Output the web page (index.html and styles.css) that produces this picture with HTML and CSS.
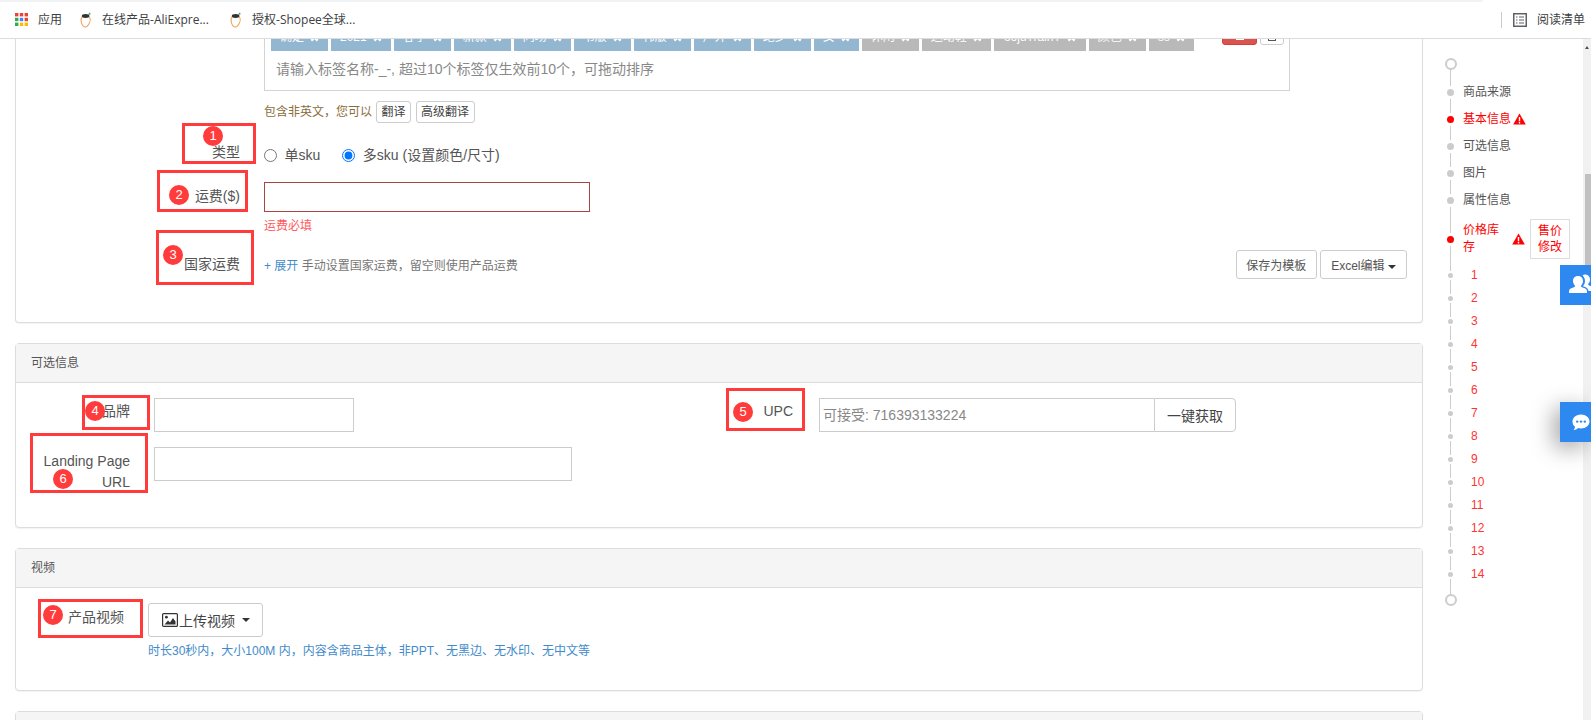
FILE: index.html
```html
<!DOCTYPE html>
<html lang="zh-CN">
<head>
<meta charset="utf-8">
<title>产品编辑</title>
<link rel="stylesheet" href="styles.css">
</head>
<body>
<div class="omni-edge"></div>
<header class="bookmarks">
  <svg class="apps" width="13" height="13" viewBox="0 0 13 13"><rect width="3.4" height="3.4" fill="#ea4335"/><rect x="4.8" width="3.4" height="3.4" fill="#ea4335"/><rect x="9.6" width="3.4" height="3.4" fill="#ea4335"/><rect y="4.8" width="3.4" height="3.4" fill="#34a853"/><rect x="4.8" y="4.8" width="3.4" height="3.4" fill="#4285f4"/><rect x="9.6" y="4.8" width="3.4" height="3.4" fill="#ea4335"/><rect y="9.6" width="3.4" height="3.4" fill="#34a853"/><rect x="4.8" y="9.6" width="3.4" height="3.4" fill="#fbbc05"/><rect x="9.6" y="9.6" width="3.4" height="3.4" fill="#fbbc05"/></svg>
  <span class="bm-text bm-apps">应用</span>
  <svg class="fruit" width="12" height="16" viewBox="0 0 12 16"><path d="M2.2 4.5 C0.3 7 1 11.5 3 13.8 C4.4 15.4 6.2 15.4 7.6 13.8 C10 11.2 11 7.2 9.2 4.5" fill="#fff" stroke="#eda55c" stroke-width="1.1"/><ellipse cx="5.6" cy="4" rx="3.8" ry="1.9" fill="#333"/><path d="M7.8 2.8 L10 0.3 L10.6 2.6 Z" fill="#4a9a58"/></svg>
  <span class="bm-text bm-first">在线产品-AliExpre...</span>
  <svg class="fruit" width="12" height="16" viewBox="0 0 12 16"><path d="M2.2 4.5 C0.3 7 1 11.5 3 13.8 C4.4 15.4 6.2 15.4 7.6 13.8 C10 11.2 11 7.2 9.2 4.5" fill="#fff" stroke="#eda55c" stroke-width="1.1"/><ellipse cx="5.6" cy="4" rx="3.8" ry="1.9" fill="#333"/><path d="M7.8 2.8 L10 0.3 L10.6 2.6 Z" fill="#4a9a58"/></svg>
  <span class="bm-text">授权-Shopee全球...</span>
  <span class="bm-divider"></span>
  <svg class="reading" width="14" height="14" viewBox="0 0 14 14"><rect x="0.75" y="0.75" width="12.5" height="12.5" fill="none" stroke="#5f6368" stroke-width="1.5"/><path d="M3 4h1.5M6 4h5M3 7h1.5M6 7h5M3 10h1.5M6 10h5" stroke="#5f6368" stroke-width="1.2"/></svg>
  <span class="bm-text">阅读清单</span>
</header>

<div class="page">
  <main class="main">
    <section class="card card-cut">
      <div class="tagbox">
        <div class="tagrow">
          <span class="tag">确定<svg class="x" viewBox="0 0 10 10"><path d="M1.5 1.5l7 7M8.5 1.5l-7 7"/></svg></span>
          <span class="tag">2021<svg class="x" viewBox="0 0 10 10"><path d="M1.5 1.5l7 7M8.5 1.5l-7 7"/></svg></span>
          <span class="tag">春季<svg class="x" viewBox="0 0 10 10"><path d="M1.5 1.5l7 7M8.5 1.5l-7 7"/></svg></span>
          <span class="tag">新款<svg class="x" viewBox="0 0 10 10"><path d="M1.5 1.5l7 7M8.5 1.5l-7 7"/></svg></span>
          <span class="tag">同场<svg class="x" viewBox="0 0 10 10"><path d="M1.5 1.5l7 7M8.5 1.5l-7 7"/></svg></span>
          <span class="tag">书版<svg class="x" viewBox="0 0 10 10"><path d="M1.5 1.5l7 7M8.5 1.5l-7 7"/></svg></span>
          <span class="tag">韩版<svg class="x" viewBox="0 0 10 10"><path d="M1.5 1.5l7 7M8.5 1.5l-7 7"/></svg></span>
          <span class="tag">户外<svg class="x" viewBox="0 0 10 10"><path d="M1.5 1.5l7 7M8.5 1.5l-7 7"/></svg></span>
          <span class="tag">跑步<svg class="x" viewBox="0 0 10 10"><path d="M1.5 1.5l7 7M8.5 1.5l-7 7"/></svg></span>
          <span class="tag">女<svg class="x" viewBox="0 0 10 10"><path d="M1.5 1.5l7 7M8.5 1.5l-7 7"/></svg></span>
          <span class="tag tag-grey">休闲<svg class="x" viewBox="0 0 10 10"><path d="M1.5 1.5l7 7M8.5 1.5l-7 7"/></svg></span>
          <span class="tag tag-grey">运动鞋<svg class="x" viewBox="0 0 10 10"><path d="M1.5 1.5l7 7M8.5 1.5l-7 7"/></svg></span>
          <span class="tag tag-grey tag-wide">oojuTrainT<svg class="x" viewBox="0 0 10 10"><path d="M1.5 1.5l7 7M8.5 1.5l-7 7"/></svg></span>
          <span class="tag tag-grey">颜色<svg class="x" viewBox="0 0 10 10"><path d="M1.5 1.5l7 7M8.5 1.5l-7 7"/></svg></span>
          <span class="tag tag-grey">ss<svg class="x" viewBox="0 0 10 10"><path d="M1.5 1.5l7 7M8.5 1.5l-7 7"/></svg></span>
          <span class="tag-actions">
            <span class="act act-red"><i></i></span>
            <span class="act act-white"><i></i></span>
          </span>
        </div>
        <p class="tag-hint">请输入标签名称-_-, 超过10个标签仅生效前10个，可拖动排序</p>
      </div>

      <div class="translate">
        <span class="translate-note">包含非英文，您可以</span>
        <button class="btn-xs">翻译</button>
        <button class="btn-xs">高级翻译</button>
      </div>

      <div class="row row-type">
        <span class="lbl lbl-wide lbl-type">类型</span>
        <div class="radios">
          <label class="radio"><input type="radio" name="sku">单sku</label>
          <label class="radio"><input type="radio" name="sku" checked>多sku (设置颜色/尺寸)</label>
        </div>
      </div>

      <div class="row row-price">
        <span class="lbl lbl-wide lbl-price">运费($)</span>
        <input class="field field-error" type="text">
      </div>
      <div class="error">运费必填</div>

      <div class="row row-country">
        <span class="lbl lbl-wide lbl-country">国家运费</span>
        <span class="note"><a class="link">+ 展开</a> 手动设置国家运费，留空则使用产品运费</span>
        <span class="country-actions">
          <button class="btn-sm">保存为模板</button>
          <button class="btn-sm btn-excel">Excel编辑<b class="caret"></b></button>
        </span>
      </div>
    </section>

    <section class="card">
      <h2 class="card-head">可选信息</h2>
      <div class="card-body body-optional">
        <div class="row">
          <span class="lbl lbl-narrow">品牌</span>
          <input class="field field-brand" type="text">
          <span class="lbl lbl-upc">UPC</span>
          <div class="group">
            <input class="group-input" type="text" placeholder="可接受: 716393133224">
            <button class="group-btn">一键获取</button>
          </div>
        </div>
        <div class="row row-landing">
          <span class="lbl lbl-narrow lbl-landing">Landing Page URL</span>
          <input class="field field-url" type="text">
        </div>
      </div>
    </section>

    <section class="card">
      <h2 class="card-head">视频</h2>
      <div class="card-body body-video">
        <div class="row">
          <span class="lbl lbl-video">产品视频</span>
          <div>
            <button class="btn-upload">
              <svg width="16" height="14" viewBox="0 0 16 14"><rect x="0.6" y="0.6" width="14.8" height="12.8" rx="1" fill="none" stroke="#333" stroke-width="1.2"/><circle cx="4.4" cy="4.2" r="1.4" fill="#333"/><path d="M2.5 11.5 L6 7.5 L8 9.5 L11 5 L13.5 8.5 V11.5 Z" fill="#333"/></svg><span class="upload-text">上传视频</span><b class="caret caret-lg"></b>
            </button>
            <p class="help">时长30秒内，大小100M 内，内容含商品主体，非PPT、无黑边、无水印、无中文等</p>
          </div>
        </div>
      </div>
    </section>

    <section class="card">
      <h2 class="card-head"></h2>
    </section>
  </main>

  <nav class="rail">
    <span class="ring"></span>
    <ul class="steps">
      <li class="step"><span class="dot"></span>商品来源</li>
      <li class="step step-red"><span class="dot"></span>基本信息<svg class="warn" width="13" height="12" viewBox="0 0 13 12"><path d="M6.5 0.5 L12.8 11.5 H0.2 Z" fill="#f00"/><path d="M5.8 4h1.4v4.2H5.8zM5.8 9h1.4v1.4H5.8z" fill="#fff"/></svg></li>
      <li class="step"><span class="dot"></span>可选信息</li>
      <li class="step"><span class="dot"></span>图片</li>
      <li class="step"><span class="dot"></span>属性信息</li>
      <li class="step step-red step-price"><span class="dot"></span><span class="step-name">价格库存</span><svg class="warn" width="13" height="12" viewBox="0 0 13 12"><path d="M6.5 0.5 L12.8 11.5 H0.2 Z" fill="#f00"/><path d="M5.8 4h1.4v4.2H5.8zM5.8 9h1.4v1.4H5.8z" fill="#fff"/></svg><span class="price-btn">售价修改</span></li>
    </ul>
    <ol class="subs">
      <li class="sub"><span class="dot dot-sm"></span>1</li>
      <li class="sub"><span class="dot dot-sm"></span>2</li>
      <li class="sub"><span class="dot dot-sm"></span>3</li>
      <li class="sub"><span class="dot dot-sm"></span>4</li>
      <li class="sub"><span class="dot dot-sm"></span>5</li>
      <li class="sub"><span class="dot dot-sm"></span>6</li>
      <li class="sub"><span class="dot dot-sm"></span>7</li>
      <li class="sub"><span class="dot dot-sm"></span>8</li>
      <li class="sub"><span class="dot dot-sm"></span>9</li>
      <li class="sub"><span class="dot dot-sm"></span>10</li>
      <li class="sub"><span class="dot dot-sm"></span>11</li>
      <li class="sub"><span class="dot dot-sm"></span>12</li>
      <li class="sub"><span class="dot dot-sm"></span>13</li>
      <li class="sub"><span class="dot dot-sm"></span>14</li>
    </ol>
    <span class="ring ring-end"></span>
  </nav>

  <div class="scrollbar"><span class="arrow"></span><span class="thumb"></span></div>
</div>

<div class="mark mark1"><span class="badge badge1">1</span></div>
<div class="mark mark2"><span class="badge badge2">2</span></div>
<div class="mark mark3"><span class="badge badge3">3</span></div>
<div class="mark mark4"><span class="badge badge4">4</span></div>
<div class="mark mark5"><span class="badge badge5">5</span></div>
<div class="mark mark6"><span class="badge badge6">6</span></div>
<div class="mark mark7"><span class="badge badge7">7</span></div>

<div class="float float-users">
  <svg width="26" height="20" viewBox="0 0 26 20"><path d="M9 2 C12.5 2 14 4.6 14 7 C14 9.2 13 10.8 11.8 11.8 C12 12.8 13 13.3 15 14 C17 14.8 18 15.6 18 17.5 V19 H0 V17.5 C0 15.6 1 14.8 3 14 C5 13.3 6 12.8 6.2 11.8 C5 10.8 4 9.2 4 7 C4 4.6 5.5 2 9 2 Z" fill="#fff"/><path d="M16 0.5 C19 0.5 21 2.8 21 5.5 C21 7.5 20.2 9 19 10 C19.2 11 20 11.4 22 12.2 C24 13 25 13.8 25 15.5 V17 H19.5 C19.2 15 18 13.8 15.5 12.8 C14.6 12.5 14.2 12.3 14 12 C15.4 10.6 16 8.8 16 7 C16 4.6 15.2 2.8 13.6 1.4 C14.3 0.8 15 0.5 16 0.5 Z" fill="#fff"/></svg>
</div>
<div class="float float-chat">
  <svg width="18" height="17" viewBox="0 0 18 17"><path d="M9 0.5 C13.7 0.5 17.5 3.6 17.5 7.5 C17.5 11.4 13.7 14.5 9 14.5 C8 14.5 7 14.4 6.2 14.1 C5 15.3 3.4 16 1.6 16.2 C2.4 15.2 2.9 14 3 12.7 C1.4 11.4 0.5 9.6 0.5 7.5 C0.5 3.6 4.3 0.5 9 0.5 Z" fill="#fff"/><circle cx="5.2" cy="7.6" r="1.2" fill="#2d89ef"/><circle cx="9" cy="7.6" r="1.2" fill="#2d89ef"/><circle cx="12.8" cy="7.6" r="1.2" fill="#2d89ef"/></svg>
</div>
</body>
</html>
```
FILE: styles.css
```css
* { box-sizing: border-box; }
html, body { margin: 0; padding: 0; }
body {
  position: relative;
  width: 1591px;
  height: 720px;
  overflow: hidden;
  background: #fff;
  color: #555;
  font: 14px/20px "Liberation Sans", "Noto Sans CJK SC", sans-serif;
}
h2, p, ul, ol { margin: 0; padding: 0; }
ul, ol { list-style: none; }
button { font-family: inherit; cursor: pointer; }

/* browser bookmarks bar */
.omni-edge {
  width: 1483px;
  height: 2px;
  background: #f1f3f4;
  border-bottom-right-radius: 6px;
}
.bookmarks {
  display: flex;
  align-items: center;
  height: 37px;
  padding: 0 6px 1px 15px;
  background: #fff;
  border-bottom: 1px solid #dadce0;
  font: 12px/16px "Open Sans", "Noto Sans CJK SC", sans-serif;
  color: #3c4043;
}
.apps { flex: none; }
.bm-text { white-space: nowrap; }
.bm-apps { margin: 0 18px 0 10px; }
.fruit { flex: none; margin-right: 10px; }
.bm-first { width: 128px; }
.bm-divider { width: 1px; height: 16px; margin-left: auto; margin-right: 11px; background: #c8cacc; }
.reading { flex: none; margin-right: 10px; }

/* page frame */
.page { display: flex; height: 681px; overflow: hidden; }
.main { flex: none; width: 1423px; padding-left: 15px; }
.card {
  margin-bottom: 20px;
  background: #fff;
  border: 1px solid #ddd;
  border-radius: 4px;
  box-shadow: 0 1px 1px rgba(0,0,0,.05);
}
.card-cut { border-top: 0; border-radius: 0 0 4px 4px; overflow: hidden; height: 284px; }
.card-head {
  height: 39px;
  padding: 0 15px;
  background: #f5f5f5;
  border-bottom: 1px solid #ddd;
  font-size: 12px;
  font-weight: 400;
  line-height: 38px;
  color: #555;
}

/* tags */
.tagbox {
  display: flow-root;
  width: 1026px;
  height: 52px;
  margin-left: 248px;
  padding: 0 5px 0 6px;
  border: 1px solid #d4d4d4;
  border-top: 0;
}
.tagrow { display: flex; gap: 3px; height: 24px; margin-top: -12px; }
.tag {
  display: flex;
  align-items: center;
  flex: none;
  height: 24px;
  padding: 0 9px 3px;
  background: #93b7d1;
  color: #fff;
  font-size: 12px;
  line-height: 21px;
  white-space: nowrap;
}
.tag-grey { background: #b9b9b9; }
.tag-wide { padding: 0 10px 3px; }
.x { width: 9px; height: 9px; margin-left: 6px; fill: none; stroke: #fff; stroke-width: 2.6; }
.tag-actions { display: flex; gap: 3px; margin-left: auto; height: 18px; align-self: flex-end; margin-bottom: 6px; }
.act { display: flex; align-items: center; justify-content: center; height: 18px; border-radius: 0 0 3px 3px; padding-top: 6px; }
.act-red { width: 35px; background: #d9534f; border: 1px solid #d43f3a; }
.act-red i { width: 8px; height: 2px; background: #fff; }
.act-white { width: 24px; background: #fff; border: 1px solid #ccc; }
.act-white i { width: 8px; height: 4px; border: 1px solid #555; }
.tag-hint { margin-top: 8px; padding-left: 5px; line-height: 20px; color: #888; font-size: 14px; white-space: nowrap; }

.translate { display: flex; align-items: center; gap: 4.5px; height: 22px; margin: 10px 0 0 248px; }
.translate-note { font-size: 12px; color: #8a6d3b; width: 108px; white-space: nowrap; margin-right: -0.5px; }
.btn-xs {
  height: 22px;
  padding: 0 4.5px;
  background: #fff;
  border: 1px solid #ccc;
  border-radius: 3px;
  color: #444;
  font-size: 12px;
  line-height: 18px;
}

/* form rows */
.row { display: flex; align-items: flex-start; }
.lbl { flex: none; text-align: right; color: #555; line-height: 20px; }
.lbl-wide { width: 224px; margin-right: 24px; }
.row-type { height: 46px; }
.lbl-type { margin-top: 19px; }
.radios { display: flex; gap: 22px; margin-top: 22px; }
.radio { display: flex; align-items: center; color: #555; }
.radio input { width: 13px; height: 13px; margin: 0 7.5px 0 0; }
.row-price { margin-top: 13px; }
.lbl-price { margin-top: 4px; }
.field { height: 34px; background: #fff; border: 1px solid #ccc; outline: 0; }
.field-error { width: 326px; height: 30px; border-color: #a94442; }
.error { margin: 5px 0 0 248px; font-size: 12px; line-height: 18px; color: #ff5a5f; }
.row-country { margin-top: 15px; padding-right: 15px; height: 29px; }
.lbl-country { margin-top: 4px; }
.note { margin-top: 6px; font-size: 12px; line-height: 20px; color: #777; }
.link { color: #428bca; }
.country-actions { display: flex; gap: 3px; margin-left: auto; }
.btn-sm {
  height: 29px;
  padding: 0 9.5px;
  background: #fff;
  border: 1px solid #ccc;
  border-radius: 3px;
  color: #555;
  font-size: 12px;
}
.btn-excel { padding: 0 10.5px; }
.caret {
  display: inline-block;
  margin-left: 3px;
  border-top: 4px solid #333;
  border-left: 4px solid transparent;
  border-right: 4px solid transparent;
  vertical-align: middle;
}
.caret-lg { margin-left: 7px; }

/* optional info */
.card-body { padding-top: 15px; }
.body-optional { height: 144px; }
.lbl-narrow { width: 114px; margin-right: 24px; }
.row .lbl-narrow { padding-top: 3px; }
.field-brand { width: 200px; }
.lbl-upc { width: 100px; margin-left: 339px; margin-right: 26px; padding-top: 3px; }
.group { display: flex; width: 417px; height: 34px; }
.group-input {
  flex: 1;
  min-width: 0;
  padding: 0 3px;
  border: 1px solid #ccc;
  border-right: 0;
  outline: 0;
  font: 14px "Liberation Sans", "Noto Sans CJK SC", sans-serif;
  color: #555;
}
.group-input::placeholder { color: #888; opacity: 1; }
.group-btn {
  flex: none;
  width: 82px;
  background: #fff;
  border: 1px solid #ccc;
  border-radius: 0 4px 4px 0;
  color: #444;
  font-size: 14px;
}
.row-landing { margin-top: 15px; }
.row .lbl-landing { padding-top: 4px; line-height: 21px; }
.field-url { width: 418px; }

/* video */
.body-video { height: 102px; }
.lbl-video { width: 108px; margin-right: 24px; padding-top: 4px; }
.btn-upload {
  display: flex;
  align-items: center;
  height: 34px;
  width: 115px;
  padding: 0 8px 0 13px;
  background: #fff;
  border: 1px solid #ccc;
  border-radius: 3px;
  color: #444;
  font-size: 14px;
}
.btn-upload svg { flex: none; margin-right: 1px; }
.upload-text { flex: none; white-space: nowrap; }
.help { margin-top: 5px; font-size: 12px; line-height: 18px; color: #428bca; white-space: nowrap; }

/* side rail */
.rail {
  position: relative;
  flex: 1;
  padding-top: 19px;
  font-size: 12px;
  color: #555;
}
.rail::before {
  content: "";
  position: absolute;
  left: 27px;
  top: 25px;
  height: 536px;
  width: 1px;
  background: #ccc;
}
.ring {
  position: relative;
  display: block;
  width: 12px;
  height: 12px;
  margin-left: 21.5px;
  background: #fff;
  border: 2px solid #ccc;
  border-radius: 50%;
}
.ring-end { margin-top: 7.5px; }
.steps { margin-top: 8.5px; }
.step { position: relative; display: flex; align-items: center; height: 27px; padding-left: 40px; white-space: nowrap; }
.step-red { color: #f00; }
.dot {
  position: absolute;
  left: 24px;
  top: 50%;
  width: 7px;
  height: 7px;
  margin-top: -3.5px;
  background: #ccc;
  border-radius: 50%;
  box-shadow: 0 0 0 3px #fff;
}
.step-red .dot { background: #f00; }
.warn { flex: none; margin-left: 2px; }
.step-price { height: 40px; margin-top: 5.5px; white-space: normal; }
.step-name { flex: none; width: 36px; line-height: 17px; }
.step-price .warn { margin-left: 13px; }
.price-btn {
  flex: none;
  width: 40px;
  height: 40px;
  margin-left: 5px;
  padding: 3px 7px;
  border: 1px solid #ddd;
  line-height: 16px;
  text-align: center;
  background: #fff;
}
.subs { margin-top: 5px; }
.sub { position: relative; height: 23px; padding-left: 48px; line-height: 23px; color: #f33; }
.dot-sm { left: 25px; width: 5px; height: 5px; margin-top: -2.5px; box-shadow: 0 0 0 2px #fff; }

/* scrollbar */
.scrollbar { position: relative; flex: none; width: 8px; background: #f1f1f1; }
.arrow {
  position: absolute;
  left: 2px;
  top: 7px;
  border-bottom: 3px solid #505050;
  border-left: 2px solid transparent;
  border-right: 2px solid transparent;
}
.thumb { position: absolute; left: 2px; right: 0; top: 135px; height: 130px; background: #c1c1c1; }

/* red annotations laid over the form */
.mark { position: absolute; border: 3px solid #ff3b3b; }
.mark1 { left: 182px; top: 123px; width: 74px; height: 41px; }
.mark2 { left: 157px; top: 170px; width: 91px; height: 42px; }
.mark3 { left: 156px; top: 230px; width: 98px; height: 55px; }
.mark4 { left: 82px; top: 395px; width: 68px; height: 35px; }
.mark5 { left: 726px; top: 388px; width: 79px; height: 43px; }
.mark6 { left: 30px; top: 433px; width: 118px; height: 60px; }
.mark7 { left: 38px; top: 599px; width: 105px; height: 39px; }
.badge {
  position: absolute;
  width: 20px;
  height: 20px;
  background: #ff3b3b;
  border-radius: 50%;
  color: #fff;
  font-size: 13px;
  line-height: 20px;
  text-align: center;
}
.badge1 { left: 18px; top: 0; }
.badge2 { left: 9px; top: 12px; }
.badge3 { left: 4px; top: 12px; }
.badge4 { left: 0; top: 3px; }
.badge5 { left: 4px; top: 11px; }
.badge6 { left: 20px; top: 33px; }
.badge7 { left: 2px; top: 3px; }

/* floating side tabs */
.float {
  position: absolute;
  left: 1560px;
  width: 31px;
  height: 40px;
  overflow: hidden;
  background: #2d89ef;
}
.float-users { top: 265px; }
.float-users svg { margin: 9px 0 0 9px; display: block; }
.float-chat { top: 402px; box-shadow: -6px 6px 22px rgba(0,0,0,.35); overflow: visible; }
.float-chat svg { margin: 12px 0 0 12px; display: block; }
```
